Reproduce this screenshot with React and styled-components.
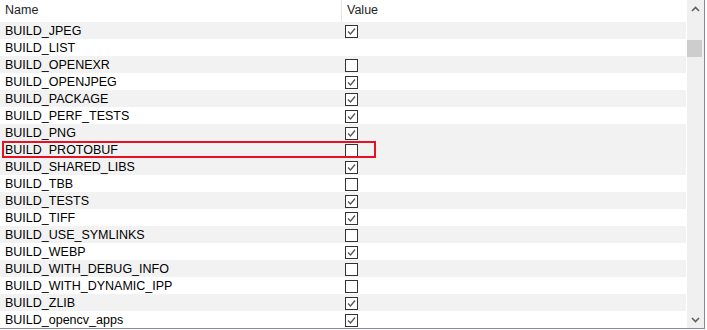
import React from "react";
import styled, { createGlobalStyle } from "styled-components";

const Global = createGlobalStyle`
  body { margin: 0; background: #fff; }
`;

const Frame = styled.div({
  width: 704,
  height: 328,
  display: "flex",
  borderRight: "1px solid #868b96",
  borderBottom: "1px solid #868b96",
  fontFamily: '"Liberation Sans", Arial, sans-serif',
  fontSize: 12.5,
  color: "#000",
  overflow: "hidden",
});
const Table = styled.div({
  width: 687,
  display: "flex",
  flexDirection: "column",
});
const Header = styled.div({
  height: 22,
  display: "grid",
  gridTemplateColumns: "341px 1fr",
  alignItems: "center",
  color: "#1e1e1e",
});
const HeadCell = styled.div({
  paddingLeft: 5,
  height: 22,
  lineHeight: "20px",
  borderLeft: (p) => (p.$divided ? "1px solid #e5e5e5" : "none"),
});
const Row = styled.div({
  height: 17,
  display: "grid",
  gridTemplateColumns: "341px 1fr",
  alignItems: "center",
  width: 686,
  boxSizing: "border-box",
  background: (p) => (p.$shaded ? "#f2f2f2" : "#fff"),
  position: "relative",
});
const Name = styled.div({ paddingLeft: 5, lineHeight: "18px" });
const Value = styled.div({ paddingLeft: 4, display: "flex", alignItems: "center" });
const Box = styled.div({
  width: 11,
  height: 11,
  border: "1px solid #333",
  background: "#fff",
  display: "flex",
  alignItems: "center",
  justifyContent: "center",
});
const Highlight = styled.div({
  position: "absolute",
  left: 2,
  top: 0,
  width: 374,
  height: 17,
  boxSizing: "border-box",
  border: "2px solid #e81123",
  pointerEvents: "none",
});
const Scrollbar = styled.div({
  width: 17,
  background: "#f0f0f0",
  display: "flex",
  flexDirection: "column",
  alignItems: "center",
});
const Arrow = styled.div({
  height: 17,
  width: 17,
  display: "flex",
  alignItems: "center",
  justifyContent: "center",
});
const Track = styled.div({ flex: 1, width: 17, display: "flex", flexDirection: "column" });
const Thumb = styled.div({
  marginTop: 23,
  width: 15,
  height: 17,
  background: "#cdcdcd",
});

const rows = [
  ["BUILD_JPEG", true],
  ["BUILD_LIST", null],
  ["BUILD_OPENEXR", false],
  ["BUILD_OPENJPEG", true],
  ["BUILD_PACKAGE", true],
  ["BUILD_PERF_TESTS", true],
  ["BUILD_PNG", true],
  ["BUILD_PROTOBUF", false],
  ["BUILD_SHARED_LIBS", true],
  ["BUILD_TBB", false],
  ["BUILD_TESTS", true],
  ["BUILD_TIFF", true],
  ["BUILD_USE_SYMLINKS", false],
  ["BUILD_WEBP", true],
  ["BUILD_WITH_DEBUG_INFO", false],
  ["BUILD_WITH_DYNAMIC_IPP", false],
  ["BUILD_ZLIB", true],
  ["BUILD_opencv_apps", true],
];

function Check({ checked }) {
  return (
    <Box>
      {checked && (
        <svg width="9" height="9" viewBox="0 0 9 9">
          <path d="M1 4.5 L3.5 7 L8 1.5" fill="none" stroke="#555" strokeWidth="1.3" />
        </svg>
      )}
    </Box>
  );
}

export default function App() {
  return (
    <>
      <Global />
      <Frame>
        <Table>
          <Header>
            <HeadCell>Name</HeadCell>
            <HeadCell $divided>Value</HeadCell>
          </Header>
          {rows.map(([name, val], i) => (
            <Row key={name} $shaded={i % 2 === 0 || name === "BUILD_PROTOBUF"}>
              <Name>{name}</Name>
              <Value>{val !== null && <Check checked={val} />}</Value>
              {name === "BUILD_PROTOBUF" && <Highlight />}
            </Row>
          ))}
        </Table>
        <Scrollbar>
          <Arrow>
            <svg width="9" height="6" viewBox="0 0 9 6">
              <path d="M1 5 L4.5 1.5 L8 5" fill="none" stroke="#606060" strokeWidth="1.6" />
            </svg>
          </Arrow>
          <Track>
            <Thumb />
          </Track>
          <Arrow>
            <svg width="9" height="6" viewBox="0 0 9 6">
              <path d="M1 1 L4.5 4.5 L8 1" fill="none" stroke="#606060" strokeWidth="1.6" />
            </svg>
          </Arrow>
        </Scrollbar>
      </Frame>
    </>
  );
}
